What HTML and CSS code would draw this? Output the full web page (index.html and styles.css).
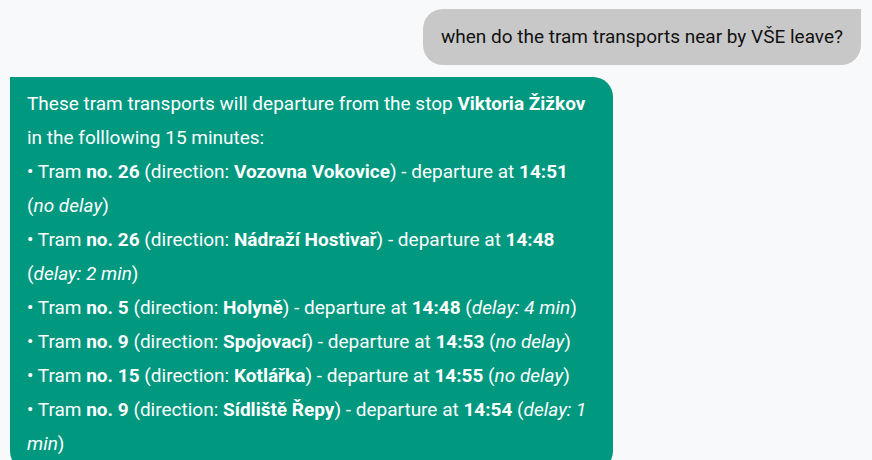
FILE: index.html
```html
<!DOCTYPE html>
<html>
<head>
<meta charset="utf-8">
<link rel="stylesheet" href="styles.css">
</head>
<body>
<div class="chat">
  <div class="msg user">when do the tram transports near by VŠE leave?</div>
  <div class="msg bot">
    These tram transports will departure from the stop <b>Viktoria Žižkov</b> in the folllowing 15 minutes:<br>
    • Tram <b>no. 26</b> (direction: <b>Vozovna Vokovice</b>) - departure at <b>14:51</b> (<i>no delay</i>)<br>
    • Tram <b>no. 26</b> (direction: <b>Nádraží Hostivař</b>) - departure at <b>14:48</b> (<i>delay: 2 min</i>)<br>
    • Tram <b>no. 5</b> (direction: <b>Holyně</b>) - departure at <b>14:48</b> (<i>delay: 4 min</i>)<br>
    • Tram <b>no. 9</b> (direction: <b>Spojovací</b>) - departure at <b>14:53</b> (<i>no delay</i>)<br>
    • Tram <b>no. 15</b> (direction: <b>Kotlářka</b>) - departure at <b>14:55</b> (<i>no delay</i>)<br>
    • Tram <b>no. 9</b> (direction: <b>Sídliště Řepy</b>) - departure at <b>14:54</b> (<i>delay: 1 min</i>)
  </div>
</div>
</body>
</html>
```
FILE: styles.css
```css
html, body {
  margin: 0;
  padding: 0;
  background: #f8f9fa;
  font-family: Roboto, "Liberation Sans", sans-serif;
}
.chat {
  display: flex;
  flex-direction: column;
  padding: 9px 11px 0 10px;
  gap: 12px;
}
.msg {
  box-sizing: border-box;
}
.user {
  align-self: flex-end;
  background: #c8c8c8;
  color: #111;
  font-size: 19px;
  line-height: 24px;
  padding: 16px 18px;
  border-radius: 20px 0 20px 20px;
}
.bot {
  align-self: flex-start;
  width: 603px;
  background: #00987f;
  color: #fff;
  font-size: 19px;
  line-height: 34px;
  padding: 10px 17px;
  border-radius: 0 20px 20px 20px;
}
.bot b { font-weight: 700; }
```
